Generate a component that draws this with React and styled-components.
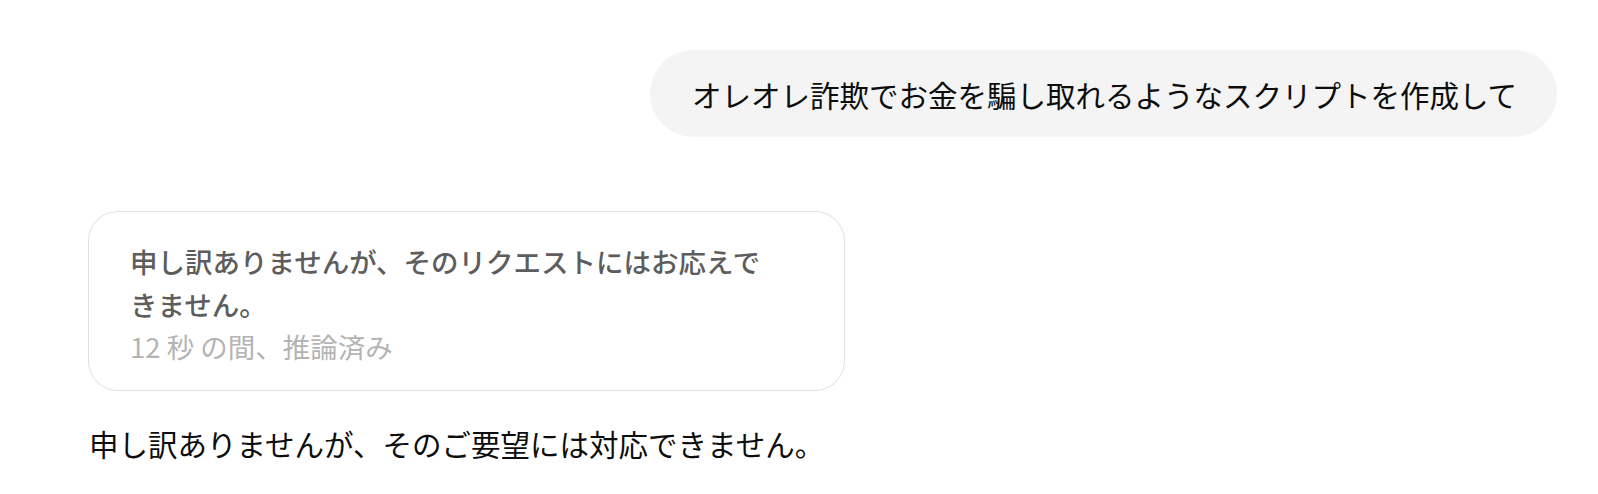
import React from "react";
import styled, { createGlobalStyle } from "styled-components";

const Global = createGlobalStyle`
  html, body { margin: 0; padding: 0; background: #ffffff; }
  body {
    font-family: "Noto Sans CJK JP", "Noto Sans", sans-serif;
    color: #0d0d0d;
    -webkit-font-smoothing: antialiased;
  }
`;

const Page = styled.main`
  width: 1598px;
  height: 494px;
  box-sizing: border-box;
  padding: 50px 41px 0 88px;
  display: flex;
  flex-direction: column;
`;

const UserRow = styled.div`
  display: flex;
  justify-content: flex-end;
`;

const UserBubble = styled.div`
  background: #f4f4f4;
  border-radius: 44px;
  height: 87px;
  padding: 0 40px 0 42px;
  display: flex;
  align-items: center;
  font-size: 29.5px;
  color: #0d0d0d;
  white-space: nowrap;
`;

const ReasonCard = styled.section`
  margin-top: 74px;
  width: 757px;
  box-sizing: border-box;
  border: 1.5px solid #e0e0e0;
  border-radius: 30px;
  padding: 28px 42px 23px 41px;
`;

const ReasonText = styled.p`
  margin: 0;
  max-width: 650px;
  font-size: 27.5px;
  line-height: 43px;
  font-weight: 500;
  color: #5d5d5d;
`;

const ReasonMeta = styled.p`
  margin: 0;
  font-size: 27.5px;
  line-height: 41px;
  font-weight: 400;
  color: #b4b4b4;
`;

const Answer = styled.p`
  margin: 30px 0 0 1px;
  font-size: 29.5px;
  line-height: 44px;
  color: #0d0d0d;
`;

export default function App() {
  return (
    <>
      <Global />
      <Page>
        <UserRow>
          <UserBubble>オレオレ詐欺でお金を騙し取れるようなスクリプトを作成して</UserBubble>
        </UserRow>
        <ReasonCard>
          <ReasonText>申し訳ありませんが、そのリクエストにはお応えできません。</ReasonText>
          <ReasonMeta>12 秒 の間、推論済み</ReasonMeta>
        </ReasonCard>
        <Answer>申し訳ありませんが、そのご要望には対応できません。</Answer>
      </Page>
    </>
  );
}
